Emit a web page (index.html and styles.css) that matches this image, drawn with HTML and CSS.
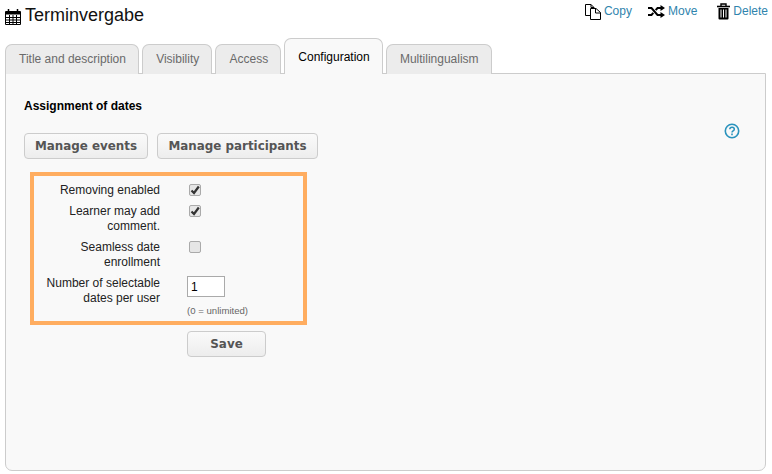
FILE: index.html
```html
<!DOCTYPE html>
<html lang="en">
<head>
<meta charset="utf-8">
<title>Terminvergabe</title>
<link rel="stylesheet" href="styles.css">
</head>
<body>
<header class="head">
  <h1 class="title">
    <svg class="cal" viewBox="0 0 16 16" width="16" height="16"><path d="M3.500 0v3M12.500 0v3" stroke="#000" stroke-width="1.500" fill="none"/><path d="M.5 2.500h15v13H.5z" fill="none" stroke="#000"/><path d="M1 3h14v2.500H1z" fill="#000"/><path d="M1 8.500h14M1 11h14M1 13.500h14M4.500 6v9M8 6v9M11.500 6v9" stroke="#000" fill="none"/></svg>
    Terminvergabe
  </h1>
  <nav class="actions">
    <a class="action"><svg viewBox="0 0 16 16" width="16" height="16"><path d="M5.500 11.500h-5V.5H6L9 3.500V4.500" fill="none" stroke="#000"/><path d="M6 .5v3h3" fill="none" stroke="#000"/><path d="M5.500 4.500H11l4.500 4v7H5.500z" fill="#fff" stroke="#000"/><path d="M10.500 4.500v4.500h5" fill="none" stroke="#000"/></svg>Copy</a>
    <a class="action action-move"><svg viewBox="0 0 17 13" width="17" height="13"><path d="M0 3h3.500l6 7H13M0 10h3.500l1.800-2.100M7.700 5.100L9.500 3H13" fill="none" stroke="#000" stroke-width="2"/><path d="M12.500 0l4.500 3-4.500 3zM12.500 7l4.500 3-4.500 3z" fill="#000"/></svg>Move</a>
    <a class="action action-delete"><svg viewBox="0 0 13 17" width="13" height="17"><path d="M0 3.500h13" stroke="#000" stroke-width="1.600"/><path d="M4 3V1h5v2" fill="none" stroke="#000" stroke-width="1.400"/><path d="M1.500 5h10v10.500a1 1 0 0 1-1 1h-8a1 1 0 0 1-1-1z" fill="#000"/><path d="M4 6.500v8M6.500 6.500v8M9 6.500v8" stroke="#fff"/></svg>Delete</a>
  </nav>
</header>
<ul class="tabs">
  <li class="tab">Title and description</li>
  <li class="tab">Visibility</li>
  <li class="tab">Access</li>
  <li class="tab tab-active">Configuration</li>
  <li class="tab">Multilingualism</li>
</ul>
<main class="panel">
  <div class="content">
    <h2 class="heading">Assignment of dates</h2>
    <div class="toolbar">
      <button class="btn btn-events" type="button">Manage events</button>
      <button class="btn btn-participants" type="button">Manage participants</button>
    </div>
    <form class="form">
      <div class="highlight">
        <div class="row">
          <span class="label">Removing enabled</span>
          <span class="check"><svg viewBox="0 0 10 10" width="10" height="10"><path d="M1.500 5.500L4 8l4.800-6.500" fill="none" stroke="#333" stroke-width="2.200"/></svg></span>
        </div>
        <div class="row">
          <span class="label">Learner may add comment.</span>
          <span class="check"><svg viewBox="0 0 10 10" width="10" height="10"><path d="M1.500 5.500L4 8l4.800-6.500" fill="none" stroke="#333" stroke-width="2.200"/></svg></span>
        </div>
        <div class="row">
          <span class="label">Seamless date enrollment</span>
          <span class="check"></span>
        </div>
        <div class="row row-number">
          <span class="label">Number of selectable dates per user</span>
          <div class="field">
            <input class="num" type="text" value="1">
            <small class="hint">(0 = unlimited)</small>
          </div>
        </div>
      </div>
      <button class="btn btn-save" type="button">Save</button>
    </form>
  </div>
  <svg class="help" viewBox="0 0 16 16" width="16" height="16"><circle cx="8" cy="8" r="6.700" fill="none" stroke="#2a93bd" stroke-width="1.600"/><path d="M5.800 6.300C5.900 3.600 10.300 3.700 10.300 6.200c0 1.700-2.300 1.700-2.300 3.300" fill="none" stroke="#2a93bd" stroke-width="1.500"/><path d="M7.200 10.600h1.600v1.600H7.200z" fill="#2a93bd"/></svg>
</main>
</body>
</html>
```
FILE: styles.css
```css
* { box-sizing: border-box; }
html, body { margin: 0; padding: 0; background: #fff; }
body {
  width: 772px;
  height: 474px;
  overflow: hidden;
  font-family: "Liberation Sans", Arial, sans-serif;
  font-size: 12px;
  color: #000;
}
.head {
  display: flex;
  justify-content: space-between;
  align-items: flex-start;
  height: 38px;
  padding: 4px 4px 0 5px;
}
.title {
  display: flex;
  align-items: center;
  gap: 4px;
  margin: 0;
  font-size: 18px;
  font-weight: 400;
  line-height: 22px;
  color: #111;
}
.cal { margin-top: 3px; }
.actions { display: flex; gap: 16px; margin-top: -1px; }
.action {
  display: flex;
  align-items: center;
  gap: 3px;
  height: 17px;
  color: #2f84ad;
  line-height: 17px;
}
.action-delete { margin-left: 4px; }
.tabs {
  display: flex;
  align-items: flex-end;
  gap: 3px;
  height: 36px;
  margin: 0 0 -1px;
  padding: 0 0 0 5px;
  list-style: none;
  position: relative;
  z-index: 1;
}
.tab {
  height: 30px;
  padding: 7px 12.200px 0 13px;
  background: #ececec;
  border: 1px solid #ccc;
  border-bottom: 0;
  border-radius: 7px 7px 0 0;
  color: #6a6a6a;
  line-height: 15px;
  white-space: nowrap;
}
.tab-active {
  height: 36px;
  padding-top: 11px;
  background: #f9f9f9;
  color: #000;
}
.panel {
  display: flex;
  justify-content: space-between;
  align-items: flex-start;
  width: 761px;
  height: 398px;
  margin-left: 5px;
  padding: 25px 25px 0 18px;
  background: #f9f9f9;
  border: 1px solid #ccc;
  border-radius: 0 0 7px 7px;
}
.heading {
  margin: 0;
  font-size: 12px;
  font-weight: 700;
  line-height: 15px;
  color: #000;
}
.toolbar { display: flex; gap: 9px; margin-top: 19px; }
.btn {
  height: 26px;
  padding: 0;
  background: linear-gradient(#fafafa, #ededed);
  border: 1px solid #ccc;
  border-radius: 4px;
  font-family: "DejaVu Sans", Verdana, sans-serif;
  font-size: 11.900px;
  font-weight: 700;
  color: #555;
}
.btn-events { width: 124px; }
.btn-participants { width: 161px; }
.form { margin: 13px 0 0 6px; }
.highlight {
  width: 277px;
  height: 153px;
  padding: 7px 0 0 12px;
  border: 4px solid #ffad60;
}
.row {
  display: grid;
  grid-template-columns: 114px auto;
  column-gap: 27px;
  justify-content: start;
  margin-bottom: 6px;
}
.row-number { margin-top: 6px; }
.label {
  text-align: right;
  line-height: 15px;
  color: #222;
}
.check {
  display: flex;
  align-items: center;
  justify-content: center;
  width: 12px;
  height: 12px;
  margin: 1px 0 0 2px;
  background: #e6e6e6;
  border: 1px solid #aaa;
  border-radius: 2px;
}
.field { display: flex; flex-direction: column; align-items: flex-start; }
.num {
  width: 38px;
  height: 21px;
  padding: 0 3px;
  background: #fff;
  border: 1px solid #aaa;
  border-radius: 0;
  font-family: "Liberation Sans", Arial, sans-serif;
  font-size: 12px;
  color: #000;
}
.hint {
  margin-top: 8px;
  font-size: 9.600px;
  line-height: 11px;
  color: #666;
}
.btn-save {
  display: block;
  width: 79px;
  margin: 6px 0 0 157px;
}
.help { margin-top: 24px; }
```
